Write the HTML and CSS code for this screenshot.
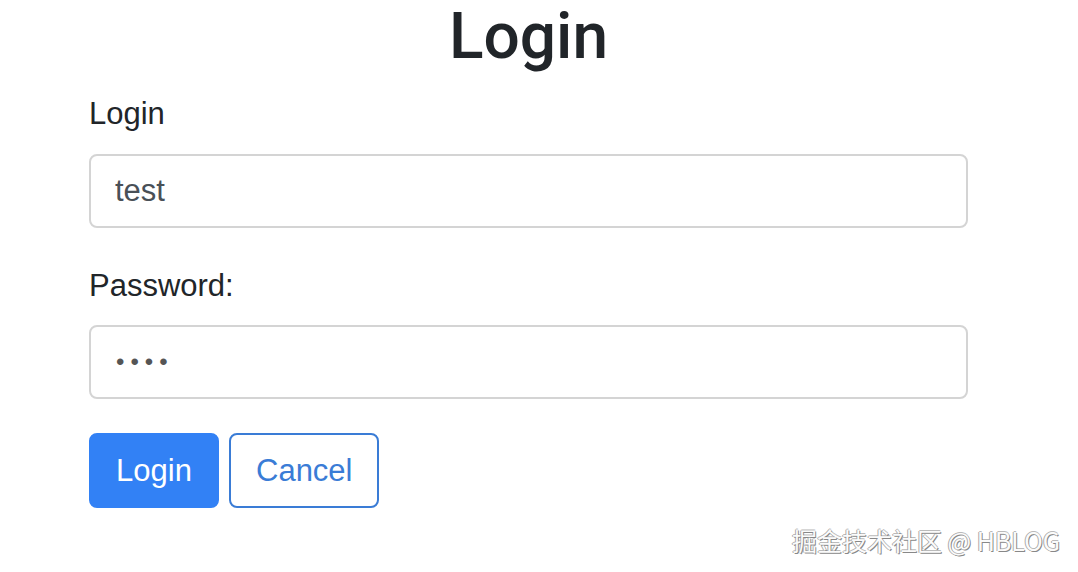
FILE: index.html
```html
<!DOCTYPE html>
<html lang="en">
<head>
<meta charset="utf-8">
<title>Login</title>
<link rel="stylesheet" href="styles.css">
</head>
<body>
<main class="page">
  <h1 class="title">Login</h1>
  <form class="form">
    <div class="group">
      <label class="label" for="login">Login</label>
      <input class="input" id="login" type="text" value="test">
    </div>
    <div class="group">
      <label class="label" for="password">Password:</label>
      <input class="input input-password" id="password" type="password" value="test">
    </div>
    <div class="actions">
      <button type="button" class="btn btn-primary">Login</button>
      <button type="button" class="btn btn-outline">Cancel</button>
    </div>
  </form>
</main>
<div class="watermark">掘金技术社区 @ HBLOG</div>
</body>
</html>
```
FILE: styles.css
```css
html, body {
  margin: 0;
  padding: 0;
  background: #fff;
}
body {
  font-family: "Liberation Sans", Arial, "Noto Sans CJK SC", sans-serif;
  color: #212529;
  width: 1078px;
  height: 572px;
  overflow: hidden;
  position: relative;
}
.page {
  display: flex;
  flex-direction: column;
  width: 879px;
  margin-left: 89px;
}
.title {
  margin: 0;
  font-family: Roboto, "Liberation Sans", sans-serif;
  font-size: 64px;
  font-weight: 500;
  line-height: 74px;
  text-align: center;
  color: #212529;
}
.form {
  margin-top: 17px;
  display: flex;
  flex-direction: column;
}
.group {
  display: flex;
  flex-direction: column;
  margin-bottom: 35px;
}
.group + .group {
  margin-bottom: 34px;
}
.label {
  font-size: 31px;
  line-height: 46.5px;
  margin-bottom: 16px;
  color: #212529;
}
.input {
  box-sizing: border-box;
  height: 74px;
  width: 100%;
  border: 2px solid #d4d4d4;
  border-radius: 8px;
  padding: 0 24px;
  font-family: "Liberation Sans", Arial, sans-serif;
  font-size: 31px;
  color: #495057;
  background: #fff;
  outline: none;
}
.input-password {
  font-size: 24px;
  letter-spacing: 6px;
  padding-left: 25px;
  color: #555;
}
.actions {
  display: flex;
  gap: 10px;
}
.btn {
  box-sizing: border-box;
  height: 75px;
  border-radius: 8px;
  font-family: "Liberation Sans", Arial, sans-serif;
  font-size: 31px;
  padding: 0 25px;
  cursor: pointer;
}
.btn-primary {
  width: 130px;
  background: #3281f5;
  border: 2px solid #3281f5;
  color: #fff;
}
.btn-outline {
  width: 150px;
  background: #fff;
  border: 2px solid #3a7cd6;
  color: #3a7cd6;
}
.watermark {
  position: absolute;
  right: 18px;
  bottom: 18px;
  font-family: "Noto Sans CJK SC", "Liberation Sans", sans-serif;
  font-size: 25px;
  line-height: 28px;
  color: #fbfbfb;
  text-shadow: 1px 1px 0 #888, -1px 0 0 #aaa, 0 -1px 0 #bbb;
}
```
